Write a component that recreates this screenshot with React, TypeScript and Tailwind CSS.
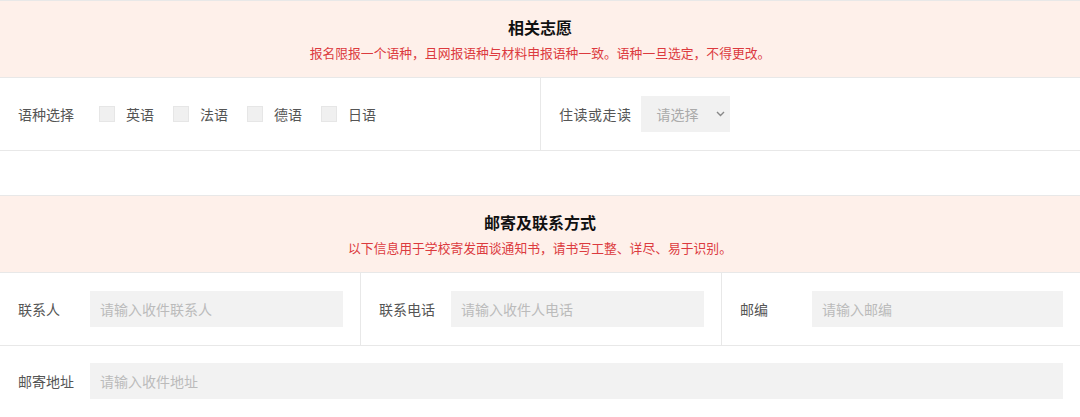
const font = { fontFamily: '"Noto Sans CJK SC", "Noto Sans", sans-serif' };

function SectionHeader({ title, note }: { title: string; note: string }) {
  return (
    <div className="flex h-[78px] flex-col items-center justify-center border-y border-[#e8e8e8] bg-[#fef0ea]">
      <div className="text-[16px] font-bold leading-5 text-[#111]">{title}</div>
      <div className="mt-[8px] text-[12.8px] leading-4 text-[#dc3a3e]">{note}</div>
    </div>
  );
}

function Field({ label, placeholder }: { label: string; placeholder: string }) {
  return (
    <div className="flex items-center pl-[18px] pr-[17px]">
      <span className="w-[72px] shrink-0 text-[14px] text-[#555]">{label}</span>
      <div className="flex h-[36px] flex-1 items-center bg-[#f2f2f2] px-[10px] text-[14px] text-[#bbb]">
        {placeholder}
      </div>
    </div>
  );
}

export default function App() {
  const langs = ["英语", "法语", "德语", "日语"];
  return (
    <div className="h-[417px] w-[1080px] overflow-hidden bg-white" style={font}>
      <SectionHeader
        title="相关志愿"
        note="报名限报一个语种，且网报语种与材料申报语种一致。语种一旦选定，不得更改。"
      />
      {/* 语种 / 住读 */}
      <div className="flex h-[73px] border-b border-[#e8e8e8]">
        <div className="flex w-[541px] items-center border-r border-[#e8e8e8] pl-[18px]">
          <span className="mr-[25px] text-[14px] text-[#555]">语种选择</span>
          {langs.map((l) => (
            <label key={l} className="mr-[19px] flex items-center">
              <span className="h-[16px] w-[16px] border border-[#e6e6e6] bg-[#f0f0f0]" />
              <span className="ml-[11px] text-[14px] text-[#555]">{l}</span>
            </label>
          ))}
        </div>
        <div className="flex flex-1 items-center pl-[18px]">
          <span className="mr-[9px] text-[14px] tracking-[0.5px] text-[#555]">住读或走读</span>
          <div className="flex h-[36px] w-[89px] items-center justify-between bg-[#f1f1f1] pl-[16px] pr-[5px] text-[14px] text-[#aaa]">
            请选择
            <svg width="9" height="6" viewBox="0 0 9 6" fill="none">
              <path d="M1 1l3.5 3.5L8 1" stroke="#888" strokeWidth="1.4" />
            </svg>
          </div>
        </div>
      </div>
      <div className="h-[44px]" />
      <SectionHeader
        title="邮寄及联系方式"
        note="以下信息用于学校寄发面谈通知书，请书写工整、详尽、易于识别。"
      />
      <div className="grid h-[73px] grid-cols-[361px_361px_1fr] border-b border-[#e8e8e8]">
        <div className="border-r border-[#e8e8e8] py-[18px]">
          <Field label="联系人" placeholder="请输入收件联系人" />
        </div>
        <div className="border-r border-[#e8e8e8] py-[18px]">
          <Field label="联系电话" placeholder="请输入收件人电话" />
        </div>
        <div className="py-[18px]">
          <Field label="邮编" placeholder="请输入邮编" />
        </div>
      </div>
      <div className="py-[17px]">
        <Field label="邮寄地址" placeholder="请输入收件地址" />
      </div>
    </div>
  );
}
